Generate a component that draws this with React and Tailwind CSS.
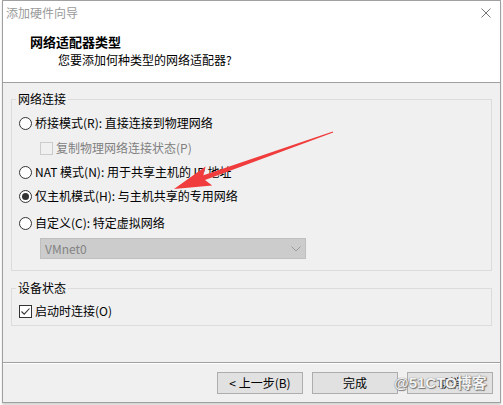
import React from "react";

function Radio({ checked }) {
  return (
    <span className="flex h-[13px] w-[13px] shrink-0 items-center justify-center rounded-full border border-[#333333] bg-white">
      {checked && <span className="h-[7px] w-[7px] rounded-full bg-[#333333]" />}
    </span>
  );
}

function Check({ checked, disabled }) {
  return (
    <span
      className={
        disabled
          ? "flex h-[13px] w-[13px] shrink-0 items-center justify-center border border-[#cccccc] bg-[#f0f0f0]"
          : "flex h-[13px] w-[13px] shrink-0 items-center justify-center border border-[#333333] bg-white"
      }
    >
      {checked && (
        <svg width="11" height="11" viewBox="0 0 11 11">
          <path d="M1.5 5.5 L4.2 8.2 L9.5 2.5" fill="none" stroke="#333333" strokeWidth="1.1" />
        </svg>
      )}
    </span>
  );
}

function Row({ children, control, className, textClass }) {
  return (
    <div className={`flex h-4 items-center ${className}`}>
      {control}
      <span className={`ml-[3px] whitespace-nowrap leading-4 ${textClass}`}>{children}</span>
    </div>
  );
}

function Btn({ children }) {
  return (
    <button className="flex h-[22px] w-[86px] items-center justify-center border border-[#adadad] bg-[#e1e1e1] text-[12px] leading-4 text-black">
      {children}
    </button>
  );
}

export default function App() {
  return (
    <div className="relative h-[405px] w-[503px] overflow-hidden bg-white font-['Noto_Sans_CJK_SC',sans-serif] text-[12px] text-black">
      <div className="ml-[2px] flex h-[403px] w-[499px] flex-col border border-[#a0a0a0] shadow-[0_2px_2px_rgba(0,0,0,0.18)]">
        {/* header */}
        <div className="h-[82px] shrink-0 border-b border-[#a0a0a0] bg-white">
          <div className="mt-[4px] flex h-4 items-center justify-between pl-[3px] pr-[9px]">
            <span className="leading-4 text-[#9a9a9a]">添加硬件向导</span>
            <svg width="10" height="10" viewBox="0 0 10 10">
              <path d="M0.5 0.5 L9.5 9.5 M9.5 0.5 L0.5 9.5" stroke="#777777" strokeWidth="1" />
            </svg>
          </div>
          <div className="mt-[13px] pl-[27px] text-[13px] font-bold leading-4">网络适配器类型</div>
          <div className="mt-[2px] pl-[55px] leading-4">您要添加何种类型的网络适配器?</div>
        </div>

        {/* body */}
        <div className="flex flex-1 flex-col bg-[#f0f0f0]">
          <fieldset className="mx-[8px] mt-[8px] border border-[#dcdcdc] pb-[11px] pl-[7px] pr-2">
            <legend className="ml-[-3px] px-[2px] leading-4">网络连接</legend>
            <Row className="mt-[8px]" control={<Radio />}>桥接模式(R): 直接连接到物理网络</Row>
            <Row className="ml-[21px] mt-[9px]" control={<Check disabled />} textClass="text-[#808080]">
              复制物理网络连接状态(P)
            </Row>
            <Row className="mt-[8px]" control={<Radio />}>NAT 模式(N): 用于共享主机的 IP 地址</Row>
            <Row className="mt-[8px]" control={<Radio checked />}>仅主机模式(H): 与主机共享的专用网络</Row>
            <Row className="mt-[11px]" control={<Radio />}>自定义(C): 特定虚拟网络</Row>
            <div className="ml-[21px] mt-[7px] flex h-[21px] w-[266px] items-center justify-between border border-[#bfbfbf] bg-[#cccccc] pl-[4px] pr-[4px]">
              <span className="leading-4 text-[#838383]">VMnet0</span>
              <svg width="10" height="6" viewBox="0 0 10 6">
                <path d="M0.5 0.5 L5 5 L9.5 0.5" fill="none" stroke="#9a9a9a" strokeWidth="1" />
              </svg>
            </div>
          </fieldset>

          <fieldset className="mx-[8px] mt-[9px] border border-[#dcdcdc] pb-[6px] pl-[7px] pr-2">
            <legend className="ml-[-3px] px-[2px] leading-4">设备状态</legend>
            <Row className="mt-[7px]" control={<Check checked />}>启动时连接(O)</Row>
          </fieldset>

          {/* footer */}
          <div className="mt-auto border-t border-[#a0a0a0]">
            <div className="flex justify-end gap-[9px] border-t border-white pb-[8px] pr-[7px] pt-[8px]">
              <Btn>&lt; 上一步(B)</Btn>
              <Btn>完成</Btn>
              <Btn>取消</Btn>
            </div>
          </div>
        </div>
      </div>

      {/* annotation arrow */}
      <svg className="pointer-events-none absolute left-0 top-0" width="503" height="405" viewBox="0 0 503 405">
        <polygon
          points="174,189 205.6,166.6 203.4,175.2 332.8,131.4 333.2,132.6 205,180 212.2,185.4"
          fill="#f03c3c"
        />
      </svg>

      {/* watermark */}
      <div className="pointer-events-none absolute left-[394px] top-[374px] whitespace-nowrap font-['Liberation_Sans','Noto_Sans_CJK_SC',sans-serif] text-[15px] font-bold leading-[18px] text-[#f2f2f2] [text-shadow:0_0_1px_#555,1px_1px_1px_#777]">
        @51CTO博客
      </div>
    </div>
  );
}
